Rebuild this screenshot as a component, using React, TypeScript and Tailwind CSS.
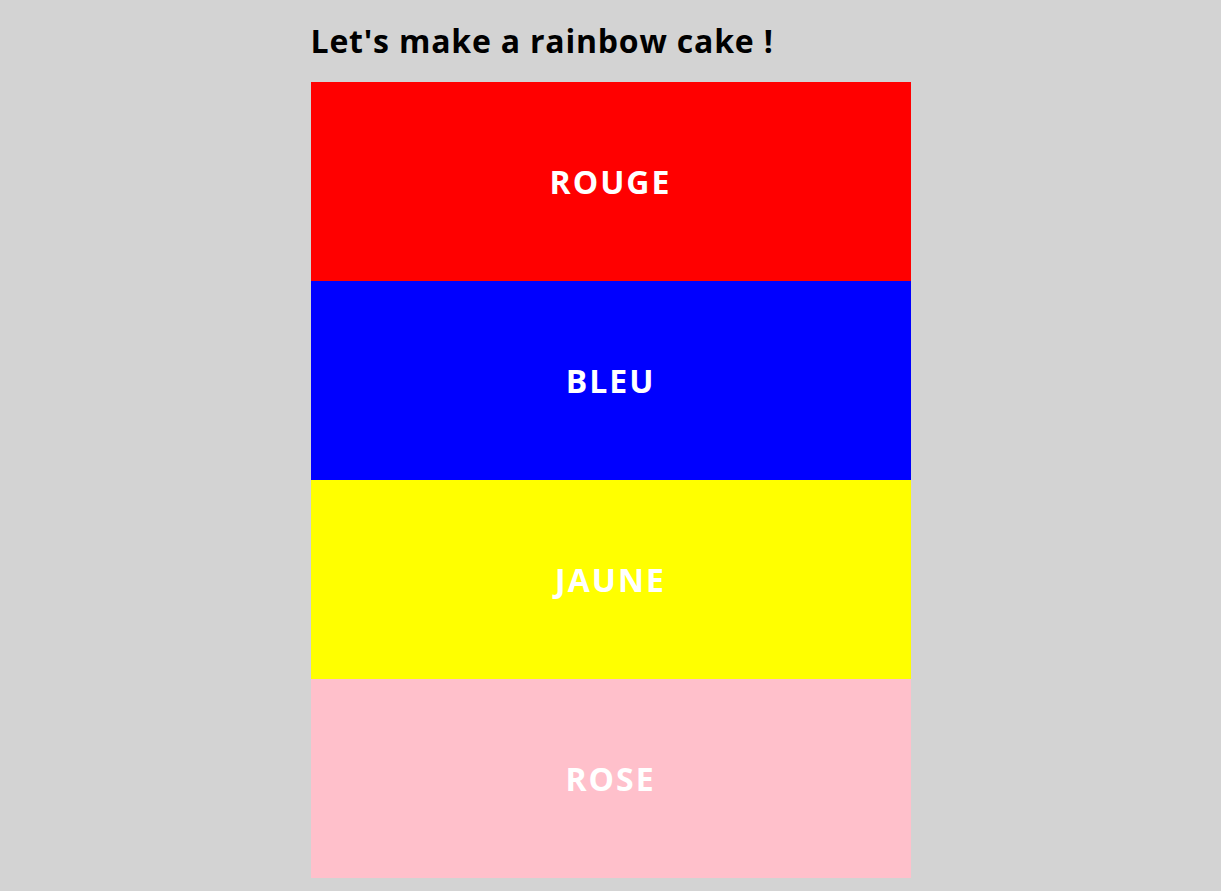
export default function App() {
  const bands = [
    { label: "ROUGE", cls: "bg-[#ff0000]" },
    { label: "BLEU", cls: "bg-[#0000ff]" },
    { label: "JAUNE", cls: "bg-[#ffff00]" },
    { label: "ROSE", cls: "bg-[#ffc0cb]" },
  ];
  return (
    <div className="min-h-screen bg-[#d3d3d3] font-['Open_Sans',sans-serif]">
      <div className="mx-auto w-[600px] pb-[14px]">
        <h1 className="pt-[21px] pb-[22px] text-[32px] leading-[39px] font-bold text-black tracking-[0.8px]">
          Let's make a rainbow cake !
        </h1>
        <div className="flex flex-col">
          {bands.map((b) => (
            <div
              key={b.label}
              className={`${b.cls} h-[199px] flex items-center justify-center`}
            >
              <span className="text-white text-[32px] font-bold leading-[39px] tracking-[2px] -mt-[1px]">
                {b.label}
              </span>
            </div>
          ))}
        </div>
      </div>
    </div>
  );
}
